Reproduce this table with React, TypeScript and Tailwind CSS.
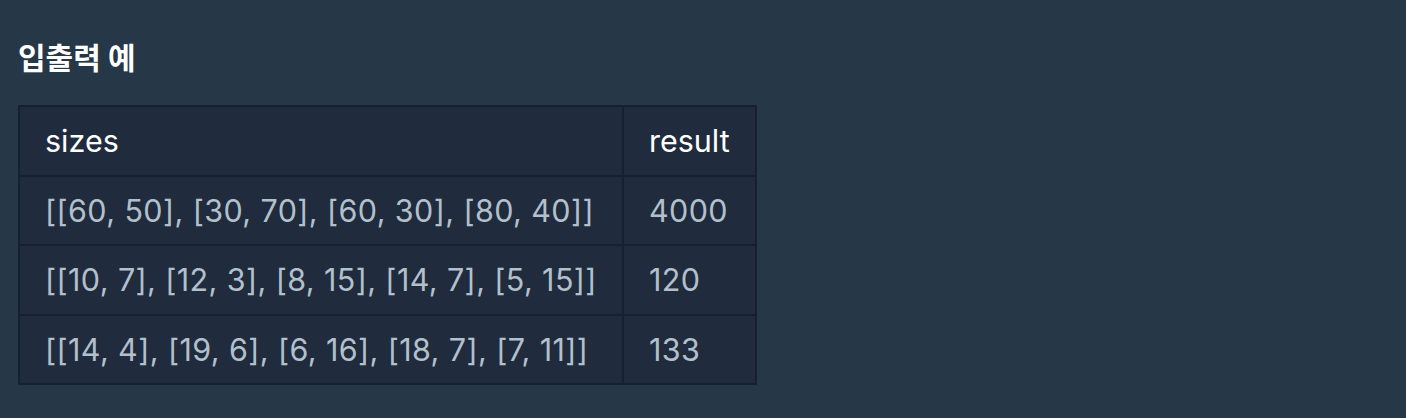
const rows: [string, string][] = [
  ["[[60, 50], [30, 70], [60, 30], [80, 40]]", "4000"],
  ["[[10, 7], [12, 3], [8, 15], [14, 7], [5, 15]]", "120"],
  ["[[14, 4], [19, 6], [6, 16], [18, 7], [7, 11]]", "133"],
];

export default function App() {
  return (
    <div className="min-h-[418px] w-full bg-[#263747] pl-[18px] pt-[37px] font-['Inter','Noto_Sans_CJK_KR',sans-serif]">
      <h5 className="text-[30px] font-bold leading-[42px] text-white">입출력 예</h5>
      <table className="mt-[26px] border-collapse border-2 border-[#172030] bg-[#202b3d] text-[30.5px] leading-[39.5px]">
        <thead>
          <tr>
            <th className="border-2 border-[#172030] px-[25px] py-[14px] text-left font-normal text-white">sizes</th>
            <th className="border-2 border-[#172030] px-[25px] py-[14px] text-left font-normal text-white">result</th>
          </tr>
        </thead>
        <tbody>
          {rows.map(([sizes, result]) => (
            <tr key={sizes}>
              <td className="border-2 border-[#172030] px-[25px] py-[14px] tracking-[0.4px] text-[#b2c0cc]">{sizes}</td>
              <td className="border-2 border-[#172030] px-[25px] py-[14px] tracking-[0.4px] text-[#b2c0cc]">{result}</td>
            </tr>
          ))}
        </tbody>
      </table>
    </div>
  );
}
